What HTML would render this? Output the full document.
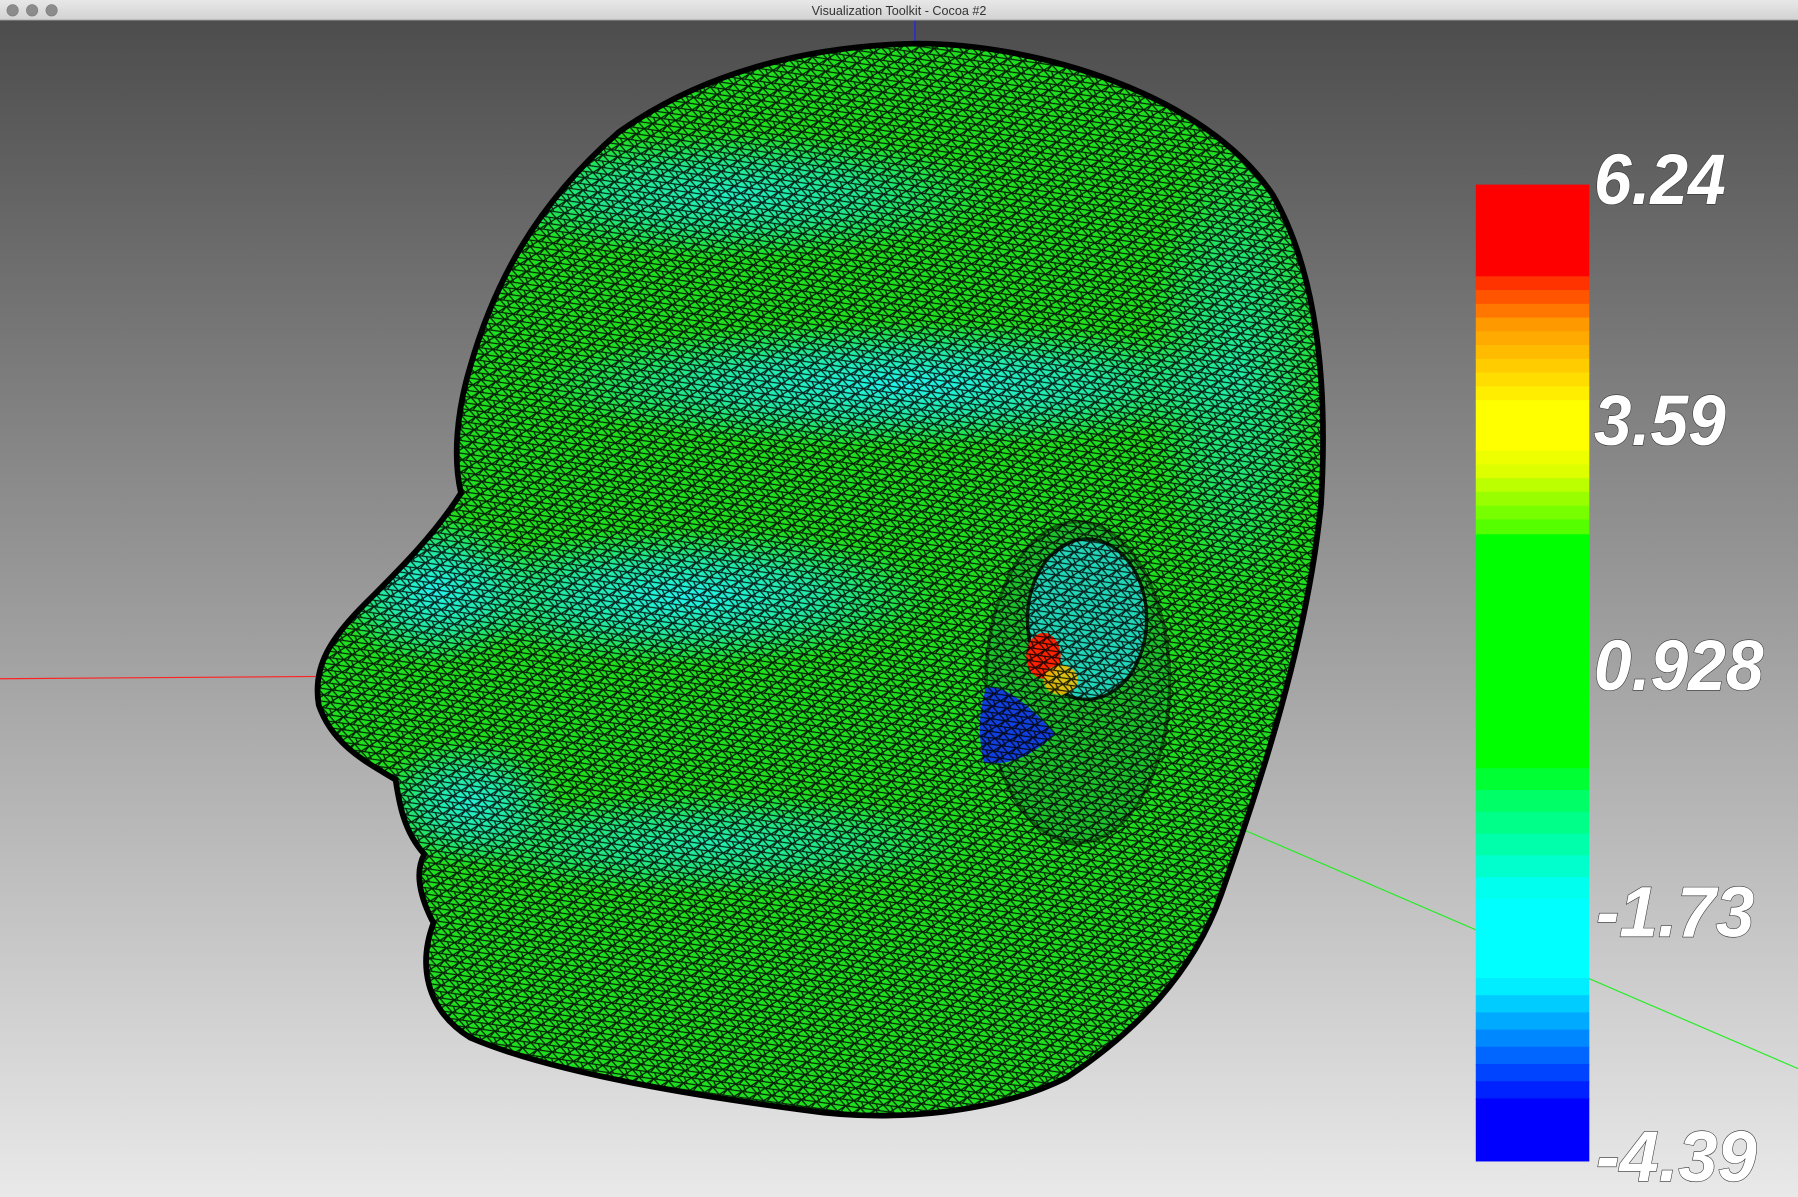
<!DOCTYPE html>
<html><head><meta charset="utf-8"><style>
html,body{margin:0;padding:0;width:1798px;height:1197px;overflow:hidden;background:#888}
svg{display:block}
</style></head><body>
<svg width="1798" height="1197" viewBox="0 0 1568 1044" preserveAspectRatio="none" xmlns="http://www.w3.org/2000/svg">
<defs>
<linearGradient id="bg" x1="0" y1="0" x2="0" y2="1">
<stop offset="0" stop-color="#4a4a4a"/><stop offset="0.5" stop-color="#9a9a9a"/><stop offset="1" stop-color="#e9e9e9"/>
</linearGradient>
<linearGradient id="tb" x1="0" y1="0" x2="0" y2="1">
<stop offset="0" stop-color="#e8e8e8"/><stop offset="1" stop-color="#d2d2d2"/>
</linearGradient>
<pattern id="mesh" width="13" height="11" patternUnits="userSpaceOnUse" patternTransform="rotate(8)">
<path d="M0 0H13M0 5.5H13M0 11H13M0 0L6.5 5.5L0 11M13 0L6.5 5.5L13 11M6.5 5.5L3 11M6.5 0L10 5.5" stroke="#000" stroke-width="1.1" fill="none" opacity="0.85"/>
</pattern>
<radialGradient id="cy" cx="0.5" cy="0.5" r="0.5">
<stop offset="0" stop-color="#22f5ee" stop-opacity="1"/><stop offset="0.5" stop-color="#22eedd" stop-opacity="0.7"/><stop offset="1" stop-color="#22eedd" stop-opacity="0"/>
</radialGradient>
<clipPath id="hc"><path id="hp" d="M800 38 C900 38 1050 80 1110 170 C1150 240 1158 340 1152 440 C1140 560 1100 680 1065 780 C1040 850 990 900 930 940 C870 970 780 980 700 968 C600 955 480 935 410 905 C370 880 365 840 378 805 C365 780 362 760 370 745 C352 725 348 700 345 680 C320 665 290 650 278 615 C272 580 290 555 320 525 C350 495 380 465 402 430 C395 400 398 360 410 320 C430 250 465 180 540 115 C610 65 700 40 800 38Z"/></clipPath>
</defs>
<rect x="0" y="0" width="1568" height="1044" fill="url(#bg)"/>
<rect x="0" y="0" width="1568" height="17.5" fill="url(#tb)"/>
<line x1="0" y1="17.5" x2="1568" y2="17.5" stroke="#999" stroke-width="0.8"/>
<circle cx="11" cy="9" r="5" fill="#8c8c8c" stroke="#777" stroke-width="0.5"/>
<circle cx="28" cy="9" r="5" fill="#8c8c8c" stroke="#777" stroke-width="0.5"/>
<circle cx="45" cy="9" r="5" fill="#8c8c8c" stroke="#777" stroke-width="0.5"/>
<text x="784" y="13" text-anchor="middle" font-family="Liberation Sans, sans-serif" font-size="11" fill="#333">Visualization Toolkit - Cocoa #2</text>
<line x1="798" y1="18" x2="798" y2="40" stroke="#2222ff" stroke-width="1.2"/>
<line x1="0" y1="592" x2="278" y2="590" stroke="#ff2222" stroke-width="1"/>
<line x1="990" y1="683" x2="1568" y2="932" stroke="#22ee22" stroke-width="1"/>
<g clip-path="url(#hc)">
<rect x="250" y="30" width="920" height="960" fill="#1fe01f"/>
<ellipse cx="790" cy="335" rx="330" ry="55" fill="url(#cy)"/>
<ellipse cx="640" cy="170" rx="230" ry="55" fill="url(#cy)" opacity="0.8"/>
<ellipse cx="600" cy="520" rx="220" ry="60" fill="url(#cy)"/>
<ellipse cx="380" cy="515" rx="90" ry="65" fill="url(#cy)"/>
<ellipse cx="410" cy="700" rx="80" ry="55" fill="url(#cy)" opacity="0.9"/>
<ellipse cx="620" cy="735" rx="230" ry="45" fill="url(#cy)" opacity="0.7"/>
<ellipse cx="1080" cy="320" rx="80" ry="200" fill="url(#cy)" opacity="0.6"/>
<ellipse cx="940" cy="595" rx="80" ry="140" fill="#1ca83c" opacity="0.5" stroke="#000" stroke-width="3"/>
<ellipse cx="948" cy="540" rx="52" ry="70" fill="#22dddd" opacity="0.8" stroke="#000" stroke-width="3"/>
<ellipse cx="910" cy="572" rx="15" ry="20" fill="#ff2200"/>
<ellipse cx="925" cy="593" rx="15" ry="13" fill="#f0c000" opacity="0.9"/>
<path d="M860 600 Q880 595 920 640 Q890 670 858 665 Q850 630 860 600Z" fill="#1040e0"/>
<rect x="250" y="30" width="920" height="960" fill="url(#mesh)"/>
</g>
<use href="#hp" fill="none" stroke="#000" stroke-width="5"/>
<g>
<rect x="1287" y="161" width="99" height="81" fill="#ff0000"/>
<rect x="1287" y="241" width="99" height="13" fill="#ff3300"/>
<rect x="1287" y="253" width="99" height="13" fill="#ff5500"/>
<rect x="1287" y="265" width="99" height="13" fill="#ff7700"/>
<rect x="1287" y="277" width="99" height="13" fill="#ff9900"/>
<rect x="1287" y="289" width="99" height="13" fill="#ffaa00"/>
<rect x="1287" y="301" width="99" height="13" fill="#ffbb00"/>
<rect x="1287" y="313" width="99" height="13" fill="#ffcc00"/>
<rect x="1287" y="325" width="99" height="13" fill="#ffdd00"/>
<rect x="1287" y="337" width="99" height="13" fill="#ffee00"/>
<rect x="1287" y="349" width="99" height="45" fill="#ffff00"/>
<rect x="1287" y="393" width="99" height="13" fill="#eeff00"/>
<rect x="1287" y="405" width="99" height="13" fill="#ddff00"/>
<rect x="1287" y="417" width="99" height="13" fill="#bbff00"/>
<rect x="1287" y="429" width="99" height="13" fill="#99ff00"/>
<rect x="1287" y="441" width="99" height="13" fill="#77ff00"/>
<rect x="1287" y="453" width="99" height="14" fill="#55ff00"/>
<rect x="1287" y="466" width="99" height="205" fill="#00ff00"/>
<rect x="1287" y="670" width="99" height="20" fill="#00ff33"/>
<rect x="1287" y="689" width="99" height="20" fill="#00ff66"/>
<rect x="1287" y="708" width="99" height="20" fill="#00ff88"/>
<rect x="1287" y="727" width="99" height="20" fill="#00ffaa"/>
<rect x="1287" y="746" width="99" height="20" fill="#00ffcc"/>
<rect x="1287" y="765" width="99" height="20" fill="#00ffee"/>
<rect x="1287" y="784" width="99" height="70" fill="#00ffff"/>
<rect x="1287" y="853" width="99" height="16" fill="#00eeff"/>
<rect x="1287" y="868" width="99" height="16" fill="#00ccff"/>
<rect x="1287" y="883" width="99" height="16" fill="#00aaff"/>
<rect x="1287" y="898" width="99" height="16" fill="#0088ff"/>
<rect x="1287" y="913" width="99" height="16" fill="#0066ff"/>
<rect x="1287" y="928" width="99" height="16" fill="#0044ff"/>
<rect x="1287" y="943" width="99" height="16" fill="#0022ff"/>
<rect x="1287" y="958" width="99" height="55" fill="#0000ff"/>
</g>
<g font-family="Liberation Sans Narrow, Liberation Sans, sans-serif" font-style="italic" font-weight="bold" font-size="62" fill="#fff" stroke="#333" stroke-width="1" paint-order="stroke">
<text x="1390" y="178" textLength="115" lengthAdjust="spacingAndGlyphs">6.24</text>
<text x="1390" y="388" textLength="115" lengthAdjust="spacingAndGlyphs">3.59</text>
<text x="1390" y="602" textLength="148" lengthAdjust="spacingAndGlyphs">0.928</text>
<text x="1392" y="817" textLength="138" lengthAdjust="spacingAndGlyphs">-1.73</text>
<text x="1392" y="1030" textLength="140" lengthAdjust="spacingAndGlyphs">-4.39</text>
</g>
</svg>
</body></html>
